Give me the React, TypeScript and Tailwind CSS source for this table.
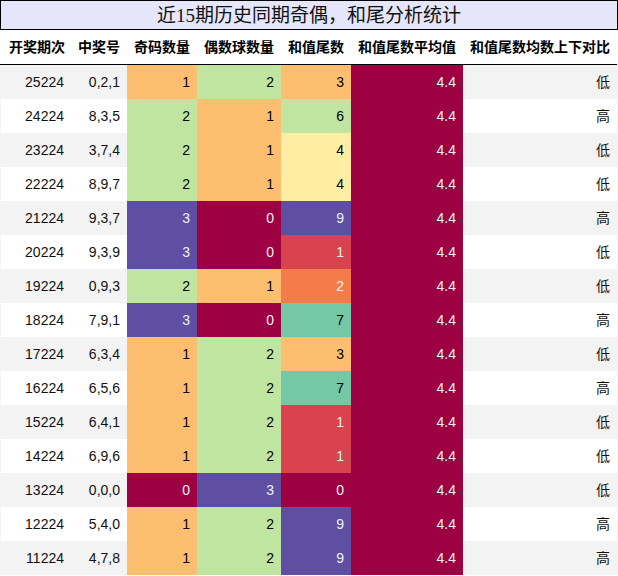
import React from "react";

type Row = [string, string, number, number, number, string];

const rows: Row[] = [
  ["25224", "0,2,1", 1, 2, 3, "低"],
  ["24224", "8,3,5", 2, 1, 6, "高"],
  ["23224", "3,7,4", 2, 1, 4, "低"],
  ["22224", "8,9,7", 2, 1, 4, "低"],
  ["21224", "9,3,7", 3, 0, 9, "高"],
  ["20224", "9,3,9", 3, 0, 1, "低"],
  ["19224", "0,9,3", 2, 1, 2, "低"],
  ["18224", "7,9,1", 3, 0, 7, "高"],
  ["17224", "6,3,4", 1, 2, 3, "低"],
  ["16224", "6,5,6", 1, 2, 7, "高"],
  ["15224", "6,4,1", 1, 2, 1, "低"],
  ["14224", "6,9,6", 1, 2, 1, "低"],
  ["13224", "0,0,0", 0, 3, 0, "低"],
  ["12224", "5,4,0", 1, 2, 9, "高"],
  ["11224", "4,7,8", 1, 2, 9, "高"],
];

const c3: Record<number, string> = {
  0: "bg-[#9e0142] text-[#f1f1f1]",
  1: "bg-[#fdbf6f] text-black",
  2: "bg-[#bfe5a0] text-black",
  3: "bg-[#5e4fa2] text-[#f1f1f1]",
};

const c9: Record<number, string> = {
  0: "bg-[#9e0142] text-[#f1f1f1]",
  1: "bg-[#d8434e] text-[#f1f1f1]",
  2: "bg-[#f67b4a] text-[#f1f1f1]",
  3: "bg-[#fdbf6f] text-black",
  4: "bg-[#feeda2] text-black",
  6: "bg-[#bfe5a0] text-black",
  7: "bg-[#75c8a5] text-black",
  9: "bg-[#5e4fa2] text-[#f1f1f1]",
};

const headers = [
  ["开奖期次", "w-[72px]"],
  ["中奖号", "w-[55px]"],
  ["奇码数量", "w-[70px]"],
  ["偶数球数量", "w-[84px]"],
  ["和值尾数", "w-[70px]"],
  ["和值尾数平均值", "w-[112px]"],
  ["和值尾数均数上下对比", "flex-1"],
];

export default function App() {
  return (
    <div
      className="w-[618px] h-[576px] overflow-hidden bg-white"
      style={{ fontFamily: '"Liberation Sans", "Noto Sans CJK SC", sans-serif' }}
    >
      <div
        className="h-[30px] border border-black bg-[#e6e6fa] flex items-center justify-center text-[19px] text-[#111] leading-none"
        style={{ fontFamily: '"Liberation Serif", "Noto Sans CJK SC", serif' }}
      >
        近15期历史同期奇偶，和尾分析统计
      </div>
      <div className="h-[35px] border-b border-black flex items-center text-[14px] font-bold text-black w-[617px]">
        {headers.map(([t, w]) => (
          <div key={t} className={`${w} text-right pr-[7px] whitespace-nowrap`}>
            {t}
          </div>
        ))}
      </div>
      <div className="bg-[#f3f3f3] px-[1px]">
        {rows.map((r, i) => (
          <div
            key={r[0]}
            className={`h-[34px] flex text-[14px] text-[#111] ${i % 2 === 0 ? "bg-[#f3f3f3]" : "bg-white"}`}
          >
            <div className="w-[71px] flex items-center justify-end pr-[8px]">{r[0]}</div>
            <div className="w-[55px] flex items-center justify-end pr-[7px]">{r[1]}</div>
            <div className={`w-[70px] flex items-center justify-end pr-[7px] ${c3[r[2]]}`}>{r[2]}</div>
            <div className={`w-[84px] flex items-center justify-end pr-[7px] ${c3[r[3]]}`}>{r[3]}</div>
            <div className={`w-[70px] flex items-center justify-end pr-[7px] ${c9[r[4]]}`}>{r[4]}</div>
            <div className="w-[112px] flex items-center justify-end pr-[7px] bg-[#9e0142] text-[#f1f1f1]">4.4</div>
            <div className="flex-1 flex items-center justify-end pr-[7px]">{r[5]}</div>
          </div>
        ))}
      </div>
    </div>
  );
}
